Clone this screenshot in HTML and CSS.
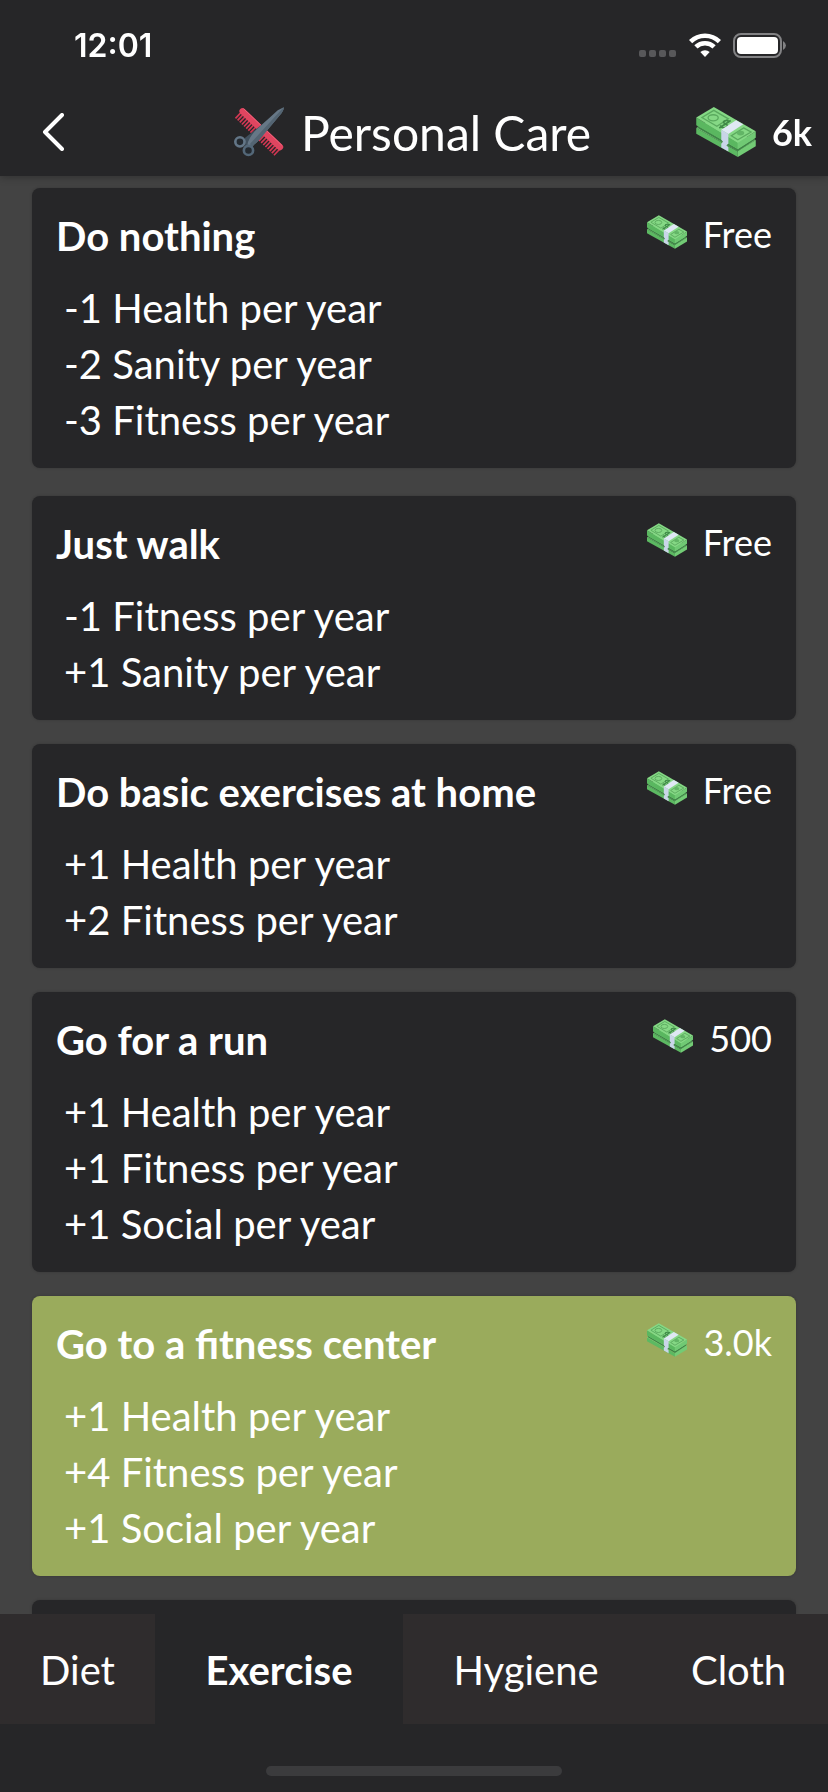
FILE: index.html
```
<!DOCTYPE html>
<html lang="en">
<head>
    <meta charset="UTF-8" />
    <meta name="viewport" content="width=device-width, initial-scale=1.0" />
    <title>Personal Care</title>
    <link rel="stylesheet" href="styles.css">
</head>
<body>
    <!-- shared icons -->
    <svg class="defs" width="0" height="0" aria-hidden="true">
        <symbol id="cash" viewBox="32 36 176 148">
            <path fill="#5cb962" d="M32 98 155 168 155 184 32 115Z" />
            <path fill="#72cb75" d="M155 166 208 134 208 152 155 184Z" />
            <path fill="#80d480" d="M32 98 60 82 208 134 155 167Z" />
            <path fill="#3f8547" d="M36 91 155 160 205 128 205 134 155 167 36 98Z" />
            <path fill="#5ab760" d="M32 67 155 141 155 160 32 90Z" />
            <path fill="#70c974" d="M155 141 208 108 208 127 155 160Z" />
            <path fill="#85d885" d="M84 36 208 108 155 142 32 67Z" />
            <path fill="none" stroke="#5aa95e" stroke-width="4" d="M84 46 127 71 93 93 49 67ZM172 98 194 110 155 133 136 121Z" />
            <ellipse cx="82" cy="68" rx="15" ry="9" fill="none" stroke="#5aa95e" stroke-width="4" />
            <ellipse cx="163" cy="113" rx="11" ry="7" fill="#62b566" />
            <path fill="none" stroke="#3f8a48" stroke-width="5" d="M130 78C118 73 108 79 115 84S130 90 121 96 104 93 104 90M134 76 100 98" />
            <path fill="#dfe8f4" d="M150 75 171 87 127 116 106 103Z" />
            <path fill="#c9d5e8" d="M106 103 127 116 127 144 121 150 127 155 127 168 106 156 106 145 111 139 106 133Z" />
        </symbol>
    </svg>

    <header class="header">
        <div class="status-bar">
            <time class="clock">12:01</time>
            <div class="status-icons">
                <svg width="38" height="24" viewBox="0 0 38 24" fill="#58585a">
                    <rect x="0" y="17" width="7" height="7" rx="2" />
                    <rect x="10" y="17" width="7" height="7" rx="2" />
                    <rect x="20" y="17" width="7" height="7" rx="2" />
                    <rect x="30" y="17" width="7" height="7" rx="2" />
                </svg>
                <svg width="32" height="24" viewBox="0 0 32 24" fill="none" stroke="#fff" stroke-width="4.6">
                    <path d="M1.6 8.6A20.5 20.5 0 0 1 30.4 8.6" />
                    <path d="M6.9 13.9A13 13 0 0 1 25.1 13.9" />
                    <path fill="#fff" stroke="none" d="M16 24 11.3 19A7 7 0 0 1 20.7 19Z" />
                </svg>
                <svg width="53" height="25" viewBox="0 0 53 25">
                    <rect x="1" y="1" width="47" height="23" rx="7" fill="none" stroke="#828284" stroke-width="2" />
                    <rect x="4" y="4" width="41" height="17" rx="4" fill="#fff" />
                    <path fill="#828284" d="M50 8Q53 10 53 12.500T50 17Z" />
                </svg>
            </div>
        </div>
        <div class="nav-bar">
            <button class="back" type="button" aria-label="Back">
                <svg width="22" height="38" viewBox="0 0 22 38" fill="none" stroke="#fff" stroke-width="4" stroke-linecap="round" stroke-linejoin="round">
                    <path d="M20 2 3 19 20 36" />
                </svg>
            </button>
            <h1 class="title">
                <svg class="title-icon" viewBox="24 36 154 152" aria-hidden="true">
                    <path fill="none" stroke="#d43753" stroke-width="24" stroke-dasharray="5 4" d="M36 60 158 177" />
                    <path fill="none" stroke="#e04560" stroke-width="19" stroke-linejoin="round" stroke-linecap="round" d="M51 49 165 158" />
                    <path fill="none" stroke="#ee6379" stroke-width="3" stroke-linecap="round" d="M55 42 170 152" />
                    <path fill="#41505d" d="M58 130 162 48 176 38 72 158 60 160Z" />
                    <path fill="#667786" d="M176 37Q178 42 170 54L98 140Q84 150 78 162L66 150Q68 134 88 110L158 46Z" />
                    <path fill="#536472" d="M176 37Q178 42 170 54L98 140Q84 150 78 162L74 148Z" />
                    <circle cx="43" cy="142" r="14" fill="#242a30" stroke="#637687" stroke-width="8" />
                    <circle cx="69" cy="168" r="14" fill="#242a30" stroke="#536778" stroke-width="8" />
                </svg>
                Personal Care
            </h1>
            <div class="balance">
                <svg class="balance-icon" aria-hidden="true"><use href="#cash" /></svg>
                <span>6k</span>
            </div>
        </div>
    </header>

    <main class="list">
        <button class="card" type="button">
            <span class="card-head">
                <span class="card-name">Do nothing</span>
                <span class="price"><svg class="price-icon" aria-hidden="true"><use href="#cash" /></svg>Free</span>
            </span>
            <span class="effect">-1 Health per year</span>
            <span class="effect">-2 Sanity per year</span>
            <span class="effect">-3 Fitness per year</span>
        </button>
        <button class="card" type="button">
            <span class="card-head">
                <span class="card-name">Just walk</span>
                <span class="price"><svg class="price-icon" aria-hidden="true"><use href="#cash" /></svg>Free</span>
            </span>
            <span class="effect">-1 Fitness per year</span>
            <span class="effect">+1 Sanity per year</span>
        </button>
        <button class="card" type="button">
            <span class="card-head">
                <span class="card-name">Do basic exercises at home</span>
                <span class="price"><svg class="price-icon" aria-hidden="true"><use href="#cash" /></svg>Free</span>
            </span>
            <span class="effect">+1 Health per year</span>
            <span class="effect">+2 Fitness per year</span>
        </button>
        <button class="card" type="button">
            <span class="card-head">
                <span class="card-name">Go for a run</span>
                <span class="price"><svg class="price-icon" aria-hidden="true"><use href="#cash" /></svg>500</span>
            </span>
            <span class="effect">+1 Health per year</span>
            <span class="effect">+1 Fitness per year</span>
            <span class="effect">+1 Social per year</span>
        </button>
        <button class="card selected" type="button" aria-pressed="true">
            <span class="card-head">
                <span class="card-name">Go to a fitness center</span>
                <span class="price"><svg class="price-icon" aria-hidden="true"><use href="#cash" /></svg>3.0k</span>
            </span>
            <span class="effect">+1 Health per year</span>
            <span class="effect">+4 Fitness per year</span>
            <span class="effect">+1 Social per year</span>
        </button>
        <div class="card"></div>
    </main>

    <footer class="footer">
        <nav class="tabs">
            <button class="tab" type="button">Diet</button>
            <button class="tab active" type="button" aria-current="page">Exercise</button>
            <button class="tab" type="button">Hygiene</button>
            <button class="tab" type="button">Cloth</button>
        </nav>
        <div class="home-indicator"></div>
    </footer>
</body>
</html>
```
FILE: styles.css
```
* {
    box-sizing: border-box;
}

body {
    margin: 0;
    height: 100vh;
    display: flex;
    flex-direction: column;
    background: #262628;
    color: #fff;
    font-family: Lato, "Liberation Sans", sans-serif;
    font-size: 40px;
}

button {
    margin: 0;
    border: 0;
    background: none;
    color: inherit;
    font: inherit;
    cursor: pointer;
}

svg {
    display: block;
    flex-shrink: 0;
}

.defs {
    position: absolute;
}

/* header */
.header {
    position: relative;
    z-index: 1;
    flex-shrink: 0;
    background: #262628;
    box-shadow: 0 1px 8px rgba(0, 0, 0, 0.3);
}

.status-bar {
    display: flex;
    align-items: center;
    justify-content: space-between;
    height: 88px;
    padding: 2px 42px 0 74px;
}

.clock {
    font-family: Inter, "Liberation Sans", sans-serif;
    font-size: 32px;
    font-weight: 600;
}

.status-icons {
    display: flex;
    align-items: center;
    gap: 12px;
}

.nav-bar {
    display: grid;
    grid-template-columns: 1fr auto 1fr;
    align-items: center;
    height: 88px;
    padding: 0 16px 0 42px;
}

.back {
    justify-self: start;
    padding: 0;
}

.title {
    display: flex;
    align-items: center;
    gap: 16px;
    margin: 0;
    padding-right: 30px;
    font-size: 48px;
    font-weight: 400;
}

.title-icon {
    width: 52px;
    height: 50px;
}

.balance {
    display: flex;
    align-items: center;
    justify-self: end;
    gap: 16px;
    font-size: 36px;
    font-weight: 700;
}

.balance-icon {
    width: 60px;
    height: 50px;
}

/* activity cards */
.list {
    flex: 1;
    min-height: 0;
    overflow-y: auto;
    scrollbar-width: none;
    padding: 12px 32px 0;
    background: #434343;
}

.card {
    display: block;
    width: 100%;
    min-height: 224px;
    margin-bottom: 24px;
    padding: 24px 24px 20px;
    border-radius: 8px;
    background: #262628;
    box-shadow: 0 0 3px rgba(0, 0, 0, 0.2);
    text-align: left;
}

.card:first-child {
    margin-bottom: 28px;
}

.card.selected {
    background: #9aab5c;
}

.card-head {
    display: flex;
    justify-content: space-between;
    align-items: flex-start;
    margin-bottom: 20px;
    line-height: 48px;
}

.card-name {
    font-weight: 700;
}

.price {
    display: flex;
    align-items: center;
    gap: 16px;
    font-size: 36px;
    line-height: 44px;
}

.price-icon {
    width: 40px;
    height: 34px;
    margin-bottom: 4px;
}

.effect {
    display: block;
    padding-left: 8px;
    line-height: 56px;
}

/* bottom tabs */
.footer {
    position: relative;
    z-index: 1;
    flex-shrink: 0;
    background: #262628;
}

.tabs {
    display: grid;
    grid-template-columns: 155fr 248fr 246fr 179fr;
    height: 110px;
    background: #2f2c2d;
}

.tab {
    padding: 2px 0 0;
}

.tab.active {
    background: #262628;
    font-weight: 700;
}

.home-indicator {
    width: 296px;
    height: 10px;
    margin: 42px auto 16px;
    border-radius: 5px;
    background: #3b3b3d;
}
```
